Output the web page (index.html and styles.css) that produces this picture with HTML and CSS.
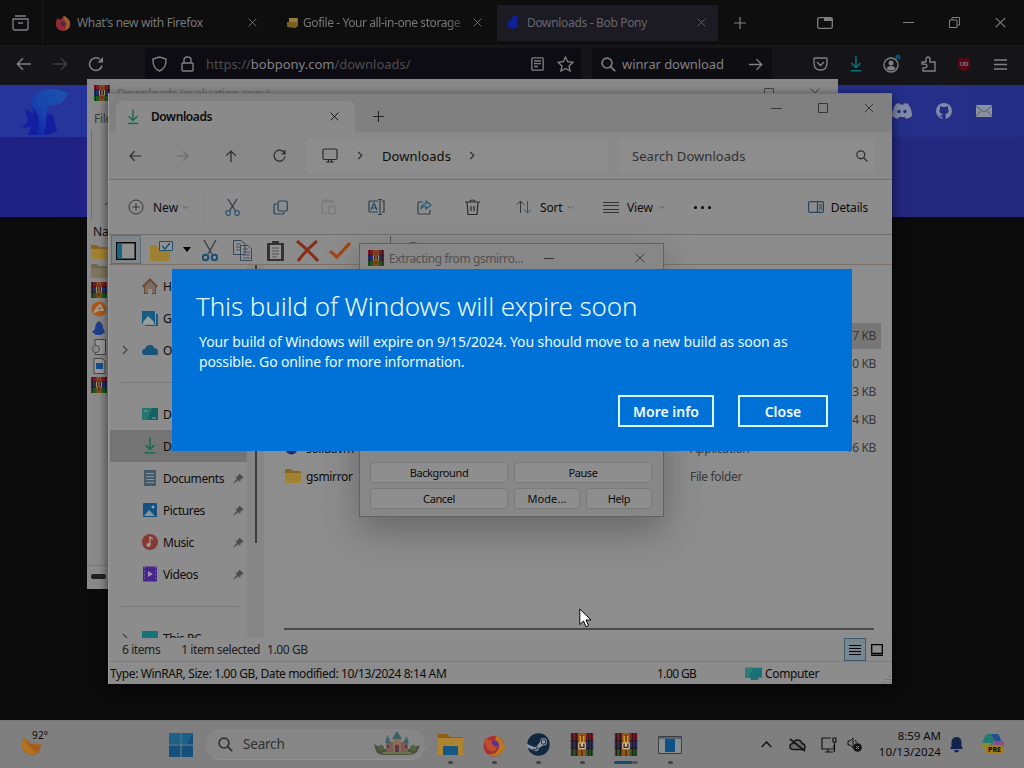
FILE: index.html
```html
<!DOCTYPE html>
<html lang="en">
<head>
<meta charset="utf-8">
<title>Desktop</title>
<link rel="stylesheet" href="styles.css">
</head>
<body>
<svg class="defs" width="0" height="0">
  <symbol id="x" viewBox="0 0 10 10"><path d="M.7 .7L9.3 9.3M9.3 .7L.7 9.3" fill="none" stroke="currentColor"/></symbol>
  <symbol id="back" viewBox="0 0 16 14"><path d="M15 7H1.5M7 1.2L1.3 7L7 12.8" fill="none" stroke="currentColor" stroke-width="1.5"/></symbol>
  <symbol id="chev" viewBox="0 0 6 10"><path d="M1 1L5 5L1 9" fill="none" stroke="currentColor" stroke-width="1.3"/></symbol>
  <symbol id="down" viewBox="0 0 8 5"><path d="M1 1L4 3.5L7 1" fill="none" stroke="#444" stroke-width=".7"/></symbol>
  <symbol id="plus" viewBox="0 0 12 12"><path d="M6 0V12M0 6H12" fill="none" stroke="currentColor" stroke-width="1.2"/></symbol>
  <symbol id="mag" viewBox="0 0 14 14"><circle cx="5.6" cy="5.6" r="4.6" fill="none" stroke="currentColor" stroke-width="1.5"/><path d="M9 9L13.3 13.3" stroke="currentColor" stroke-width="1.6"/></symbol>
  <symbol id="dl" viewBox="0 0 14 18"><path d="M7 0V12.5M2 8L7 13L12 8M1 16.5H13" fill="none" stroke="currentColor" stroke-width="1.7"/></symbol>
  <symbol id="rar" viewBox="0 0 16 16"><path fill="#7c1a2c" d="M0 0H16V5H0z"/><path fill="#22306e" d="M0 5H16V10.5H0z"/><path fill="#1b5a22" d="M0 10.5H16V16H0z"/><path stroke="#2a1612" d="M0 5H16M0 10.5H16M1.5 0V16M14.5 0V16" stroke-width=".8"/><path fill="#8a4a1c" d="M5.5 0H10.5V16H5.5z"/><path fill="#a39a6c" d="M5 5H11V10.5H5z"/><path stroke="#4a1f14" fill="none" d="M6.5 5V10M9.5 5V10M8 2V14"/></symbol>
  <symbol id="rarbig" viewBox="0 0 24 24"><path fill="#7a1c28" d="M0 0H24V8H0z"/><path fill="#2b2c66" d="M0 8H24V16H0z"/><path fill="#245a2a" d="M0 16H24V24H0z"/><path stroke="#27181a" stroke-width="1.2" d="M0 8H24M0 16H24M2 0V24M6 0V24M19 0V24M22 0V24"/><path fill="#9b5419" d="M8 0H16V24H8z"/><path fill="#d39a28" d="M9.5 3H14.5V12H9.5z"/><rect x="8" y="10" width="8" height="7" rx="1" fill="#c4bb9d"/><path d="M10 11V15H14V11M12 2V9M12 18V24" fill="none" stroke="#4c2412" stroke-width="1.4"/></symbol>
  <symbol id="folder" viewBox="0 0 16 14"><path fill="#86661a" d="M0 1Q0 0 1 0H6L8 2H15Q16 2 16 3V6H0z"/><path fill="#a18232" d="M0 4H16V13Q16 14 15 14H1Q0 14 0 13z"/></symbol>
  <symbol id="pin" viewBox="0 0 12 12"><path fill="#4c4c4c" d="M7 .5L11.5 5L10 6L8.5 6.5L7.8 9.5L5.6 7.8L1 11.5L.5 11L4.2 6.4L2.5 4.2L5.5 3.5L6 2z"/></symbol>
  <symbol id="screen" viewBox="0 0 18 14"><path fill="#187078" d="M0 0H18V11H0z"/><path fill="#2b7d76" d="M0 0H9L4 11H0z"/><path fill="#205e69" d="M6 11H14V13H6z"/></symbol>
  <symbol id="bird" viewBox="0 0 16 16"><path fill="#0f2194" d="M8 1Q13 0 14 3L12 6L12 9L12 13L9 12L8 15L5 12L2 12L3 8L1 7L6 5z"/></symbol>
  <symbol id="fox" viewBox="0 0 20 20"><circle cx="10" cy="11" r="8.7" fill="#a83035"/><path fill="#b87820" d="M12 1Q13 3 16 5Q22 12 16 17Q11 21 5 18Q14 18 14 11Q14 7 11 6z"/><circle cx="10" cy="10.5" r="4.2" fill="#5e2f95"/><path fill="#bd4d2b" d="M2 4L6 6L9 6Q7 8 9 10Q12 12 13 11Q12 16 7 15Q2 13 2 4z"/></symbol>
  <symbol id="foxtab" viewBox="0 0 20 20"><path fill="#8f2a35" d="M3 4L7 6L11 1Q19 5 19 12Q18 20 10 20T1 12Q1 7 3 4z"/><path fill="#9a6022" d="M11 1Q19 5 19 12Q18 18 12 19Q16 14 13 8Q10 5 11 1z"/><circle cx="10" cy="11" r="3" fill="#522548"/></symbol>
</svg>
<div class="desktop">
  <div class="browser">
    <div class="tabbar">
      <div class="viewbtn"><svg width="17" height="16" viewBox="0 0 17 16" fill="none" stroke="currentColor" stroke-width="1.3"><path d="M3 1H14M1 4H16V13Q16 15 14 15H3Q1 15 1 13zM6 8H11"/></svg></div>
      <div class="tab t1"><svg width="16" height="16"><use href="#foxtab"/></svg><span class="s1">What's new with Firefox</span><svg class="c" width="9" height="9"><use href="#x"/></svg></div>
      <div class="tab t2"><svg width="12" height="12" viewBox="0 0 12 12"><path fill="#78601f" d="M3 1H12V9L9 11L1 10V5H3z"/><path fill="#9a7b37" d="M3 1H11V5H3z"/></svg><span class="s2">Gofile - Your all-in-one storage</span><svg class="c" width="9" height="9"><use href="#x"/></svg></div>
      <div class="tab t3"><svg width="16" height="16"><use href="#bird"/></svg><span class="s3">Downloads - Bob Pony</span><svg class="c" width="9" height="9"><use href="#x"/></svg></div>
      <div class="slot44"><svg width="12" height="12"><use href="#plus"/></svg></div>
      <div class="winctl">
        <svg class="pip" width="16" height="12" viewBox="0 0 16 12"><rect x=".7" y=".7" width="14.6" height="10.6" rx="1.5" fill="none" stroke="currentColor" stroke-width="1.3"/><path fill="currentColor" d="M1 1H7V4H15V2L14 1z"/></svg>
        <svg width="11" height="11" viewBox="0 0 11 11"><path d="M0 5.500H11" stroke="currentColor"/></svg>
        <svg width="11" height="11" viewBox="0 0 11 11" fill="none" stroke="currentColor"><path d="M.5 3H8V10.500H.5zM3 3V.5H10.500V8H8"/></svg>
        <svg width="11" height="11"><use href="#x"/></svg>
      </div>
    </div>
    <div class="toolbar">
      <div class="ic"><svg width="16" height="14"><use href="#back"/></svg></div>
      <div class="ic dim flip"><svg width="16" height="14"><use href="#back"/></svg></div>
      <div class="ic"><svg width="16" height="16" viewBox="0 0 16 16"><path d="M14 9.5A6.3 6.3 0 1 1 11.7 3.2" fill="none" stroke="currentColor" stroke-width="1.5"/><path d="M9.5 6.5H15V1z" fill="currentColor"/></svg></div>
      <div class="urlbar">
        <svg width="15" height="16" viewBox="0 0 15 16"><path d="M7.500 1L14 3Q14.500 12 7.500 15Q.5 12 1 3z" fill="none" stroke="currentColor" stroke-width="1.4"/></svg>
        <svg class="lock" width="13" height="16" viewBox="0 0 13 16" fill="none" stroke="currentColor" stroke-width="1.4"><rect x="1" y="7" width="11" height="8" rx="1"/><path d="M3 7V4Q3 1 6.500 1T10 4V7"/></svg>
        <span class="url">https://<b>bobpony.com</b>/downloads/</span>
        <svg class="reader" width="13" height="14" viewBox="0 0 13 14" fill="none" stroke="currentColor" stroke-width="1.3"><rect x=".8" y=".8" width="11.400" height="12.400" rx="1"/><path d="M3 4H10M3 6.700H10M3 9.500H7"/></svg>
        <svg class="star" width="17" height="16" viewBox="0 0 17 16"><path d="M8.500 1L10.700 5.700L16 6.300L12 9.900L13.100 15L8.500 12.500L3.900 15L5 9.900L1 6.300L6.300 5.700z" fill="none" stroke="currentColor" stroke-width="1.300"/></svg>
      </div>
      <div class="search"><svg width="15" height="15"><use href="#mag"/></svg><span>winrar download</span><svg class="flip go" width="15" height="13"><use href="#back"/></svg></div>
      <div class="acts">
        <div class="ic"><svg width="15" height="14" viewBox="0 0 15 14" fill="none" stroke="currentColor" stroke-width="1.400"><path d="M2 1H13Q14 1 14 2V6Q14 13 7.500 13T1 6V2Q1 1 2 1zM4 5L7.500 8.500L11 5"/></svg></div>
        <div class="ic teal"><svg width="14" height="16" viewBox="0 0 14 18"><use href="#dl"/></svg></div>
        <div class="ic acct"><svg width="20" height="20" viewBox="0 0 20 20"><circle cx="9" cy="11" r="7" fill="none" stroke="currentColor" stroke-width="1.400"/><circle cx="9" cy="9" r="2.500" fill="currentColor"/><path d="M4.500 15Q5 12 9 12T13.500 15Q9 18 4.500 15z" fill="currentColor"/><circle cx="16" cy="3" r="2.600" fill="#09506a"/></svg></div>
        <div class="ic"><svg width="15" height="16" viewBox="0 0 15 16"><path d="M1 6H5V4Q5 1 7 1T9 4V6H14V15H2V12Q6 12 6 10T2 8H1z" fill="none" stroke="currentColor" stroke-width="1.400"/></svg></div>
        <div class="ic"><span class="ub">UD</span></div>
        <div class="ic"><svg width="13" height="11" viewBox="0 0 13 11"><path d="M0 1H13M0 5.500H13M0 10H13" stroke="currentColor" stroke-width="1.300"/></svg></div>
      </div>
    </div>
    <div class="site">
      <svg width="50" height="50" viewBox="0 0 50 50"><defs><linearGradient id="g" x1="1" y1="0" x2="0" y2="1"><stop offset="0" stop-color="#1c53aa"/><stop offset=".55" stop-color="#1745ae"/><stop offset="1" stop-color="#1120a8"/></linearGradient></defs><path fill="#131fa0" d="M5 24L14 29L10 17L21 27L33 30L37 46L28 50H8L11 42L2 43L8 36z"/><path fill="url(#g)" d="M13 13Q19 3 35 4L48 8Q46 15 40 19L27 22Q27 34 24 50H17Q22 34 15 25Q8 20 13 13z"/></svg>
      <div class="links">
        <svg width="20" height="16" viewBox="0 0 20 16"><path fill="currentColor" d="M4 1L7 0L8 1.500H12L13 0L16 1Q20 6 20 13Q17 15.500 14 16L13 14H7L6 16Q3 15.500 0 13Q0 6 4 1z"/><circle cx="7" cy="8.500" r="1.700" fill="#222d86"/><circle cx="13" cy="8.500" r="1.700" fill="#222d86"/></svg>
        <svg width="16" height="16" viewBox="0 0 16 16"><circle cx="8" cy="8" r="8" fill="currentColor"/><path fill="#222d86" d="M4 3L6.500 4H9.500L12 3V6Q14 10 9.500 11V16H6.500V14Q4 14 3 12Q5 13 6.500 12V11Q2 10 4 6z"/></svg>
        <svg width="16" height="12" viewBox="0 0 16 12"><rect width="16" height="12" fill="#8a939b"/><path d="M0 1L8 7L16 1M0 11L5.500 5.500M16 11L10.500 5.500" fill="none" stroke="#4c5b80"/></svg>
      </div>
    </div>
  </div>

  <div class="archive">
    <div class="atitle"><svg width="16" height="16"><use href="#rar"/></svg><span>Downloads (evaluation copy)</span><svg class="amax" width="10" height="10" viewBox="0 0 10 10"><path d="M.5 .5H9.500V9.500H.5z" fill="none" stroke="#454545"/></svg><svg width="10" height="10"><use href="#x"/></svg></div>
    <div class="amenu">File</div>
    <div class="atools"><svg width="6" height="4" viewBox="0 0 8 5"><path d="M1 4L4 1L7 4" fill="none" stroke="#333"/></svg></div>
    <div class="ahead">Name</div>
    <div class="alist">
      <svg viewBox="0 0 16 14"><use href="#folder"/></svg>
      <svg class="old" viewBox="0 0 16 14"><use href="#folder"/></svg>
      <svg><use href="#rar"/></svg>
      <svg viewBox="0 0 16 16"><circle cx="8" cy="8" r="7.500" fill="#a9581a"/><path fill="none" stroke="#a5a09a" stroke-width="1.800" d="M3 12L6 7L9 4L12 9L9 9Q7 8 6 11"/></svg>
      <svg viewBox="0 0 16 16"><path fill="#1d3f8c" d="M8 1Q12 3 12 8L14 12L10 15L5 15L1 12L4 9Q4 3 8 1z"/></svg>
      <svg viewBox="0 0 16 16"><path fill="#999" stroke="#444" d="M4 .5H14.500V15.500H4z"/><circle cx="5" cy="10" r="3.700" fill="#888" stroke="#555"/></svg>
      <svg viewBox="0 0 16 16"><path fill="#999" stroke="#444" d="M3 .5H11L14 3V15.500H3z"/><path fill="#174e8c" d="M5 5H12V11H5z"/></svg>
      <svg><use href="#rar"/></svg>
    </div>
    <div class="afoot"><i></i></div>
  </div>

  <div class="explorer">
    <div class="etitle">
      <div class="etab"><svg class="green" width="12" height="16" viewBox="0 0 14 18"><use href="#dl"/></svg><span>Downloads</span><svg class="c" width="9" height="9"><use href="#x"/></svg></div>
      <svg class="plus" width="11" height="11"><use href="#plus"/></svg>
      <div class="ectl"><svg width="11" height="11" viewBox="0 0 11 11"><path d="M0 5.500H11" stroke="currentColor"/></svg><svg width="10" height="10" viewBox="0 0 10 10"><path d="M.5 .5H9.500V9.500H.5z" fill="none" stroke="currentColor"/></svg><svg width="10" height="10"><use href="#x"/></svg></div>
    </div>
    <div class="enav">
      <div class="s48"><svg width="13" height="12" viewBox="0 0 16 14"><use href="#back"/></svg></div>
      <div class="s48 faint flip"><svg width="13" height="12" viewBox="0 0 16 14"><use href="#back"/></svg></div>
      <div class="s48 up"><svg width="13" height="12" viewBox="0 0 16 14"><use href="#back"/></svg></div>
      <div class="s48"><svg width="13" height="13" viewBox="0 0 13 13"><path d="M11.800 5A5.500 5.500 0 1 0 12 7.500M12 1V4.800H8.500" fill="none" stroke="currentColor" stroke-width="1.200"/></svg></div>
      <div class="path"><svg width="16" height="15" viewBox="0 0 16 15" fill="none" stroke="currentColor" stroke-width="1.200"><rect x="1" y="1" width="14" height="10.500" rx="1.500"/><path d="M4 14H12M6.500 12V14M9.500 12V14"/></svg><svg class="pc1" width="6" height="9" viewBox="0 0 6 10"><use href="#chev"/></svg><span>Downloads</span><svg width="6" height="9" viewBox="0 0 6 10"><use href="#chev"/></svg></div>
      <div class="find"><span>Search Downloads</span><svg width="12" height="12"><use href="#mag"/></svg></div>
    </div>
    <div class="ecmd">
      <div class="new"><svg width="16" height="16" viewBox="0 0 16 16" fill="none" stroke="#333"><circle cx="8" cy="8" r="7"/><path d="M8 4.500V11.500M4.500 8H11.500"/></svg><span>New</span><svg width="7" height="5"><use href="#down"/></svg></div>
      <div class="s48"><svg width="15" height="17" viewBox="0 0 15 17" fill="none" stroke="#30373e" stroke-width="1.200"><path d="M3 0L10.500 12M12 0L4.500 12"/><g stroke="#285675"><circle cx="3" cy="14" r="2.300"/><circle cx="12" cy="14" r="2.300"/></g></svg></div>
      <div class="s48"><svg width="15" height="15" viewBox="0 0 15 15" fill="none" stroke="#23465f" stroke-width="1.200"><rect x="5" y="1" width="9.300" height="10" rx="1.500"/><path d="M4 4H2Q1 4 1 5V12Q1 14 3 14H9Q11 14 11 12"/></svg></div>
      <div class="s48"><svg width="15" height="16" viewBox="0 0 15 16" fill="none" stroke="#747474"><path d="M4 2H1V14H6M9 2H12V5M4 1H9V3H4zM8 7H14V15H8z"/></svg></div>
      <div class="s48"><svg width="17" height="16" viewBox="0 0 17 16" fill="none" stroke="#2e3e4b" stroke-width="1.200"><path d="M10 2H2Q1 2 1 3V12Q1 13 2 13H10M14 2H16V13H14M12 0V16M10 .5H14M10 15.500H14"/><path stroke="#1b4a74" d="M3 11L6 4L9 11M4 9H8"/></svg></div>
      <div class="s48"><svg width="15" height="15" viewBox="0 0 15 15" fill="none" stroke="#333c44" stroke-width="1.200"><path d="M6 2H2Q1 2 1 3V13Q1 14 2 14H12Q13 14 13 13V10"/><path stroke="#285675" d="M9 1L14 5L9 9V6.500Q5 6 4 9Q4 4 9 4z"/></svg></div>
      <div class="s48"><svg width="15" height="17" viewBox="0 0 15 17" fill="none" stroke="#2c2c2c" stroke-width="1.200"><path d="M0 3H15M5 3Q5 1 7.500 1T10 3M2 3L3 15.500H12L13 3M6 7V12M9 7V12"/></svg></div>
      <div class="sort"><svg width="16" height="14" viewBox="0 0 16 14" fill="none" stroke="#333"><path d="M4.500 13V1M1 4.500L4.500 1L8 4.500"/><path stroke="#24557f" d="M11.500 1V13M8 9.500L11.500 13L15 9.500"/></svg><span>Sort</span><svg width="7" height="5"><use href="#down"/></svg></div>
      <div class="view"><svg width="16" height="13" viewBox="0 0 16 13"><path d="M0 1.500H16M0 4.500H16M0 8.500H16M0 11.500H16" stroke="#333"/></svg><span>View</span><svg width="7" height="5"><use href="#down"/></svg></div>
      <svg class="more" width="17" height="3" viewBox="0 0 17 3"><circle cx="1.500" cy="1.500" r="1.500"/><circle cx="8.500" cy="1.500" r="1.500"/><circle cx="15.500" cy="1.500" r="1.500"/></svg>
      <div class="details"><svg width="16" height="12" viewBox="0 0 16 12" fill="none" stroke="#24445f" stroke-width="1.200"><rect x=".6" y=".6" width="14.800" height="10.800" rx="1.500"/><path d="M9.500 1V11M11 4H14M11 6H14M11 8H14"/></svg><span>Details</span></div>
    </div>
    <div class="eclassic">
      <div class="pane"><svg width="20" height="18" viewBox="0 0 20 18"><path fill="#909090" stroke="#080808" stroke-width="1.500" d="M.8 .8H19.200V17.200H.8z"/><path fill="#176582" d="M1.500 1.500H6V16.500H1.500z"/></svg></div>
      <svg class="fc" width="24" height="20" viewBox="0 0 24 20"><path fill="#9f7f30" d="M0 4H6L8 7H20V20H0z"/><path fill="#8f9597" stroke="#244e6e" d="M9.500 .5H22.500V9.500H9.500z"/><path d="M12 5L15 8L20 2" fill="none" stroke="#164b73" stroke-width="1.300"/></svg>
      <svg class="tri" width="8" height="5"><path d="M0 0H8L4 5z"/></svg>
      <svg class="cut" width="16" height="22" viewBox="0 0 16 22" fill="none"><path d="M2 0L10 14M14 0L6 14" stroke="#40464a" stroke-width="1.500"/><g stroke="#174f79" stroke-width="2"><circle cx="3.500" cy="17.500" r="2.800"/><circle cx="12.500" cy="17.500" r="2.800"/></g></svg>
      <svg class="cp" width="19" height="21" viewBox="0 0 19 21"><path fill="#909090" stroke="#394655" d="M.5 .5H8L12 4V14.500H.5zM7.500 5.500H15L18.500 9V20.500H7.500z"/><path stroke="#405264" d="M3 4H8M3 7H7M3 10H7M10 9H15M10 12H17M10 15H17M10 18H17"/></svg>
      <svg class="pst" width="17" height="21" viewBox="0 0 17 21"><path fill="#333" d="M0 3H17V21H0zM5 1H12V4H5z"/><path fill="#929292" d="M3 5H14V19H3z"/><path stroke="#555" d="M5 8H12M5 11H12M5 14H12M5 17H10"/></svg>
      <svg class="del" width="23" height="22" viewBox="0 0 23 22"><path d="M1 1Q11 9 22 21M21 1Q10 10 2 21" fill="none" stroke="#872e18" stroke-width="3"/></svg>
      <svg class="ok" width="22" height="17" viewBox="0 0 22 17"><path d="M1 9L8 15L21 1" fill="none" stroke="#a14717" stroke-width="3.300"/></svg>
      <i class="bar"></i><svg class="arc" width="20" height="20" viewBox="0 0 20 20"><circle cx="10" cy="10" r="9" fill="#7b7b7b" stroke="#484848" stroke-width="2"/></svg>
    </div>
    <div class="ebody">
      <div class="side">
        <div class="row"><svg viewBox="0 0 16 16"><path fill="#6d4a37" d="M8 0L16 8L14 10V16H10V11H6V16H2V10L0 8z"/><path fill="#7d6c61" d="M8 3L13 8V15H10V11H6V15H3V8z"/></svg>Home</div>
        <div class="row"><svg viewBox="0 0 16 16"><path fill="#155b84" d="M0 1H13V14H0zM14 4H16V16H3V15H14z"/><path fill="#979ea0" d="M1 12L6 6L12 12V14H1z"/></svg>Gallery</div>
        <div class="row"><svg class="exp" width="6" height="10"><use href="#chev"/></svg><svg viewBox="0 0 16 16"><path fill="#16547b" d="M3 13Q0 13 0 10Q0 7 3 7Q4 3 8 3T12 6Q16 6 16 10T13 13z"/></svg>OneDrive</div>
        <div class="sep"></div>
        <div class="row"><svg viewBox="0 0 16 16"><path fill="#146267" d="M0 2H16V14H0z"/><path fill="#257770" d="M0 2H10L5 14H0z"/><path stroke="#7ba39b" d="M2 5H5M10 12H14"/></svg>Desktop</div>
        <div class="row on"><svg viewBox="0 0 16 18" class="green"><use href="#dl"/></svg>Downloads</div>
        <div class="row"><svg viewBox="0 0 16 16"><path fill="#455969" d="M2 0H14V16H2z"/><path stroke="#84929b" d="M4 3.500H12M4 6.500H12M4 9.500H12M4 12.500H12"/></svg>Documents<svg class="pin"><use href="#pin"/></svg></div>
        <div class="row"><svg viewBox="0 0 16 16"><rect x="1" y="1" width="14" height="14" rx="1" fill="#135180"/><path fill="#8397a0" d="M2 14L7 8L13 14z"/><circle cx="11" cy="5" r="1.500" fill="#8fa2aa"/></svg>Pictures<svg class="pin"><use href="#pin"/></svg></div>
        <div class="row"><svg viewBox="0 0 16 16"><circle cx="8" cy="8" r="8" fill="#853a36"/><path d="M8 11V3L11 5" fill="none" stroke="#a89690" stroke-width="1.300"/><circle cx="6.500" cy="11" r="2" fill="#a89690"/></svg>Music<svg class="pin"><use href="#pin"/></svg></div>
        <div class="row"><svg viewBox="0 0 16 16"><rect x="1" y=".5" width="14" height="15" rx="1" fill="#45258a"/><path fill="#9d92ab" d="M6 5L11 8L6 11z"/><path stroke="#786699" stroke-dasharray="1.500 2" d="M2.500 1V15M13.500 1V15"/></svg>Videos<svg class="pin"><use href="#pin"/></svg></div>
        <div class="sep s2p"></div>
        <div class="row"><svg class="exp" width="6" height="10"><use href="#chev"/></svg><svg viewBox="0 0 16 16"><path fill="#17737a" d="M0 1H16V13H0z"/></svg>This PC</div>
      </div>
      <div class="gutter"><i></i></div>
      <div class="files">
        <div class="fhead"></div>
        <div class="frow"><b></b><span></span><em></em><strong class="sel">7 KB</strong></div>
        <div class="frow"><b></b><span></span><em></em><strong>0 KB</strong></div>
        <div class="frow"><b></b><span></span><em></em><strong>3 KB</strong></div>
        <div class="frow"><b></b><span></span><em></em><strong>4 KB</strong></div>
        <div class="frow"><b><svg width="13" height="13"><circle cx="6.500" cy="6.500" r="6" fill="#172f72"/></svg></b><span>solidavm</span><em>Application</em><strong>16 KB</strong></div>
        <div class="frow"><b><svg width="16" height="14"><use href="#folder"/></svg></b><span>gsmirror</span><em>File folder</em><strong></strong></div>
        <div class="hscroll"></div>
      </div>
    </div>
    <div class="est1"><span class="e1">6 items</span><span class="e2">1 item selected</span><span class="e3">1.00 GB</span><div class="lay on"><svg width="12" height="11" viewBox="0 0 12 11"><path d="M0 1.500H12M0 4.500H12M0 7.500H12M0 10.500H12" stroke="#000"/></svg></div><div class="lay"><svg width="12" height="12" viewBox="0 0 12 12"><path d="M.7 .7H11.300V9.500H.7zM0 11.500H12" fill="none" stroke="#000" stroke-width="1.300"/></svg></div></div>
    <div class="est2"><span class="f1">Type: WinRAR, Size: 1.00 GB, Date modified: 10/13/2024 8:14 AM</span><span class="f2">1.00 GB</span><svg width="17" height="14" viewBox="0 0 18 14"><use href="#screen"/></svg><span class="f3">Computer</span><svg class="grip" width="9" height="9" viewBox="0 0 9 9"><path fill="#555" d="M7 1H8V2H7zM4 4H5V5H4zM7 4H8V5H7zM1 7H2V8H1zM4 7H5V8H4zM7 7H8V8H7z"/></svg></div>
  </div>

  <div class="extract">
    <div class="xtitle"><svg width="16" height="16"><use href="#rar"/></svg><span>Extracting from gsmirro...</span><svg class="mn" width="10" height="10"><path d="M0 5.500H10" stroke="#333"/></svg><svg width="10" height="10"><use href="#x"/></svg></div>
    <div class="xgrid"><button class="w2">Background</button><button class="w2">Pause</button><button class="w2">Cancel</button><button>Mode...</button><button>Help</button></div>
  </div>

  <div class="notice">
    <h1>This build of Windows will expire soon</h1>
    <p><span class="l1">Your build of Windows will expire on 9/15/2024. You should move to a new build as soon as</span><br><span class="l2">possible. Go online for more information.</span></p>
    <div class="btns"><button class="mi">More info</button><button class="cl">Close</button></div>
  </div>

  <svg class="cursor" width="13" height="20" viewBox="0 0 13 20"><path fill="#fff" stroke="#000" d="M.8 1V16.500L4.500 13L7 18.800L9.500 17.700L7 12H12z"/></svg>

  <div class="taskbar">
    <div class="weather"><svg width="22" height="22" viewBox="0 0 22 22"><path fill="#a75d19" d="M4 3Q7 12 20 10Q20 20 11 21Q1 20 1 11Q1 6 4 3z"/><path fill="#b0741f" d="M4 3Q5 14 16 18Q12 22 6 19Q0 15 1 9z"/></svg><span>92°</span></div>
    <div class="tk"><svg width="24" height="24" viewBox="0 0 24 24"><path fill="#14507b" d="M0 0H11.500V11.500H0zM12.500 0H24V11.500H12.500zM0 12.500H11.500V24H0zM12.500 12.500H24V24H12.500z"/><path fill="#23719a" opacity=".5" d="M0 0H11.500V11.500H0zM12.500 0H24L18 11.500H12.500z"/></svg></div>
    <div class="tsearch"><svg width="15" height="15"><use href="#mag"/></svg><span>Search</span>
      <svg class="castle" width="46" height="26" viewBox="0 0 46 26"><path fill="#48503e" d="M0 13L5 16L8 18H38L41 16L46 14L43 21Q40 24 33 24H12Q3 24 2 20z"/><path fill="#7a5d50" d="M12 11H34V21H12z"/><path fill="#916a56" d="M19 7H27V22H19z"/><path fill="#3c6266" d="M18 8L23 0L28 8zM11 12L13.500 4L17 12zM29 12L32.500 5L35 12z"/><path fill="#563647" d="M21 22V15Q23 12 25 15V22zM13 14H15V17H13zM31 14H33V17H31z"/><circle cx="7" cy="17" r="3" fill="#50603f"/><circle cx="39" cy="17" r="3" fill="#56643e"/><path stroke="#71714f" stroke-width="2" d="M9 22H37"/></svg></div>
    <div class="tk run"><svg width="25" height="23" viewBox="0 0 25 23"><path fill="#8b5e12" d="M0 1H9L12 4H25V10H0z"/><path fill="#ae8430" d="M0 5H25V22H0z"/><path fill="#155887" d="M5 14Q5 13 6 13H19Q20 13 20 14V22H5z"/></svg></div>
    <div class="tk run"><svg width="24" height="24"><use href="#fox"/></svg></div>
    <div class="tk run"><svg width="23" height="23" viewBox="0 0 23 23"><circle cx="11.500" cy="11.500" r="11.200" fill="#102840"/><path fill="#9097a0" d="M0 11L7 14Q9 13 10 13L13 9Q13 5 16.500 5T20 9T16 12.500L12 15Q11 19 8 18L5 16.500L0 14.500z"/><circle cx="16.500" cy="8.800" r="2.400" fill="#9097a0" stroke="#102840"/><path d="M6 16Q8 18 10 16T8 13.500" fill="none" stroke="#102840"/></svg></div>
    <div class="tk run"><svg width="24" height="23" viewBox="0 0 24 24"><use href="#rarbig"/></svg></div>
    <div class="tk run act"><svg width="24" height="23" viewBox="0 0 24 24"><use href="#rarbig"/></svg></div>
    <div class="tk run"><svg width="24" height="18" viewBox="0 0 24 18"><path fill="#888d90" stroke="#393f44" d="M.5 .5H23.500V17.500H.5z"/><path stroke="#526572" stroke-width="2" d="M1 2H23"/><path fill="#0e5186" d="M7 3H17V16H7z"/></svg></div>
    <div class="tray">
      <div class="y1"><svg width="11" height="7" viewBox="0 0 11 7"><path d="M.7 6L5.500 1L10.300 6" fill="none" stroke="#111" stroke-width="1.400"/></svg></div>
      <div class="y2"><svg width="17" height="14" viewBox="0 0 17 14" fill="none" stroke="#151515" stroke-width="1.500"><path fill="#6b6b6b" d="M4 11.500Q1 11.500 1 8.500T4 5.500Q5 2 8.500 2T13 5.500Q16 6 16 9T13 11.500z"/><path d="M1 1L16 13" stroke-width="1.700"/></svg></div>
      <div class="y1"><svg width="16" height="16" viewBox="0 0 16 16" fill="none" stroke="#151515" stroke-width="1.200"><path d="M10 1H1V12H13V8M4 15H12M7 12V15M12 1H15V5H12zM13.500 5V15"/></svg></div>
      <div class="y3"><svg width="15" height="15" viewBox="0 0 15 15"><path d="M1 4H3L6 1V11L3 8H1zM8 3Q10 4 9 6" fill="none" stroke="#111"/><circle cx="10.500" cy="10.500" r="4.300" fill="#111"/><path d="M9 9L12 12M12 9L9 12" stroke="#888"/></svg></div>
      <div class="clock"><span class="tm">8:59 AM</span><span class="dt">10/13/2024</span></div>
      <div class="bell"><svg width="13" height="16" viewBox="0 0 13 16"><path fill="#12244e" d="M6.500 0Q11 0 11.500 5V9L13 12H0L1.500 9V5Q2 0 6.500 0zM4 13H9Q8.500 15.500 6.500 15.500T4 13z"/></svg></div>
      <div class="pre"><svg width="24" height="24" viewBox="0 0 24 24"><path fill="#257a70" d="M7 1H15L11 14H3Q0 13 1 10L4 3Q5 1 7 1z"/><path fill="#244e93" d="M10 1H16Q18 1 19 4L20 8H14z"/><path fill="#844f8d" d="M13 8H21Q24 9 23 12L20 20H12z"/><path fill="#8a8b38" d="M1 10H10L8 18H6Q3 18 1 14z"/></svg><span>PRE</span></div>
    </div>
  </div>
</div>
</body>
</html>
```
FILE: styles.css
```css
* { box-sizing: border-box; }
body { margin: 0; background: #0b0b0b; font-family: "Noto Sans", "Open Sans", sans-serif; }
svg { display: block; flex: none; }
span { white-space: nowrap; }
.defs { position: absolute; }
.flip { transform: scaleX(-1); }
.desktop { position: relative; width: 1024px; height: 768px; overflow: hidden; background: #0b0b0b; font-size: 12px; color: #0c0c0c; }

/* browser */
.browser { color: #808083; }
.tabbar { height: 45px; display: flex; align-items: center; background: #0e0e0f; }
.viewbtn { width: 43px; height: 43px; display: flex; align-items: center; padding-left: 12px; border-right: 1px solid #1b1b1d; }
.tab { display: flex; align-items: center; height: 36px; font-size: 12px; letter-spacing: -.33px; color: #77777a; }
.tab .c { margin-left: auto; }
.t1 { width: 228px; padding: 0 14px 0 12px; gap: 6px; }
.t2 { width: 226px; padding: 0 15px; gap: 5px; }
.t2 span { letter-spacing: -.42px; -webkit-mask-image: linear-gradient(90deg, #000 92%, #0008); mask-image: linear-gradient(90deg, #000 92%, #0008); }
.t3 { width: 221px; padding: 0 12px 0 8px; gap: 6px; background: #1c1b24; color: #66666e; }
.slot44 { width: 44px; display: grid; place-items: center; }
.winctl { margin-left: auto; display: flex; align-items: center; padding-right: 18px; gap: 35px; }
.pip { margin-right: 35px; }
.toolbar { height: 40px; display: flex; align-items: center; padding: 0 0 3px 6px; background: #151519; border-top: 1px solid #18181b; }
.ic { width: 36px; display: grid; place-items: center; }
.dim { color: #3d3d41; }
.teal { color: #087374; }
.urlbar { display: flex; align-items: center; width: 436px; height: 32px; margin: 0 11px 0 31px; padding: 0 7px; background: #0d0c12; border-radius: 3px; font-size: 13px; color: #4d4d51; }
.urlbar svg { color: #808083; }
.urlbar b { font-weight: 400; color: #808085; }
.lock { margin-left: 14px; }
.url { margin-left: 12px; }
.reader { margin-left: auto; }
.star { margin-left: 13px; }
.search { display: flex; align-items: center; width: 180px; height: 32px; padding: 0 9px 0 9px; background: #0e0e12; font-size: 13px; letter-spacing: -.08px; }
.search span { margin-left: 6px; }
.go { margin-left: auto; }
.acts { display: flex; margin-left: auto; padding-right: 6px; }
.ub { width: 12px; height: 13px; border-radius: 3px 3px 6px 6px; background: #570711; font: 700 6px/12px "Liberation Sans", sans-serif; text-align: center; }
.site { height: 132px; padding: 0 32px 0 20px; display: flex; justify-content: space-between; background: linear-gradient(90deg, #26359c, #242e86) top / 100% 52px no-repeat, linear-gradient(90deg, #1f2184, #24297e); }
.links { display: flex; align-items: center; gap: 24px; height: 52px; color: #8089a6; }

/* archive window behind the explorer */
.archive { position: absolute; left: 87px; top: 79px; width: 751px; height: 510px; background: #898989; color: #3c3c3c; }
.atitle { height: 28px; display: flex; align-items: center; padding: 0 18px 0 7px; }
.atitle span { margin: 0 auto 0 7px; letter-spacing: -.3px; color: #666; }
.amax { margin-right: 36px; }
.amenu { height: 24px; padding: 3px 7px; letter-spacing: -.3px; }
.atools { height: 89px; margin-left: 4px; border-left: 1px dotted #555; padding: 71px 0 0 12px; }
.ahead { height: 24px; padding: 3px 6px; color: #111; }
.alist { padding: 0 4px; display: flex; flex-direction: column; gap: 3px; }
.alist svg { width: 16px; height: 16px; }
.alist .old { opacity: .6; filter: saturate(.6) brightness(.8); }
.afoot { margin-top: 172px; border-top: 1px solid #777; padding: 8px 4px; }
.afoot i { display: block; width: 15px; height: 5px; border-radius: 2px; background: #222; }

/* explorer */
.explorer { position: absolute; left: 108px; top: 93px; width: 784px; height: 591px; background: #8c8c8c; border-left: 1px solid #9a9a9a; border-top: 1px solid #747474; box-shadow: 0 3px 10px #000a; overflow: hidden; display: flex; flex-direction: column; }
.etitle { height: 38px; flex: none; display: flex; background: #808080; }
.etab { display: flex; align-items: center; width: 239px; margin: 7px 0 0 7px; padding: 0 16px 0 11px; background: #8a8a8a; border-radius: 7px 7px 0 0; font-weight: 600; letter-spacing: -.42px; }
.etab span { margin-left: 12px; }
.etab .c { margin-left: auto; }
.green { color: #1a6a50; }
.plus { margin: 17px 0 0 18px; color: #222; }
.ectl { margin: 9px 18px 0 auto; display: flex; gap: 36px; color: #383838; }
.enav { height: 48px; flex: none; display: flex; align-items: center; padding-left: 2px; background: #898989; border-bottom: 1px solid #707070; color: #2a2a2a; }
.s48 { width: 48px; height: 30px; display: grid; place-items: center; flex: none; }
.faint { color: #6b6b6b; }
.up { transform: rotate(90deg); }
.path { display: flex; align-items: center; width: 303px; height: 34px; margin-left: 3px; padding-left: 16px; background: #8d8d8d; border-radius: 4px; font-size: 13px; color: #2a2a2a; }
.pc1 { margin: 0 19px 0 19px; }
.path span { margin-right: 18px; letter-spacing: .1px; color: #0c0c0c; }
.find { display: flex; align-items: center; justify-content: space-between; width: 256px; height: 34px; margin-left: 10px; padding: 0 7px 0 13px; background: #8d8d8d; border-radius: 4px; font-size: 13px; letter-spacing: .05px; color: #303030; }
.ecmd { height: 55px; flex: none; display: flex; align-items: center; border-bottom: 1px solid #707070; }
.new { width: 96px; height: 42px; display: flex; align-items: center; padding-left: 19px; margin-right: 3px; border-right: 1px solid #868686; }
.new span { margin: 0 4px 0 9px; }
.sort { width: 86px; display: flex; align-items: center; margin-left: 20px; letter-spacing: -.2px; }
.sort span, .view span { margin: 0 5px 0 8px; }
.view { display: flex; align-items: center; width: 92px; padding-left: 1px; letter-spacing: -.1px; }
.details { display: flex; align-items: center; margin: 0 24px 0 auto; gap: 7px; letter-spacing: -.2px; }
.eclassic { height: 30px; flex: none; display: flex; align-items: center; padding-left: 2px; border-bottom: 1px solid #7b7168; background: #8c8c8c; }
.eclassic > svg:not(.arc):not(.tri) { position: relative; top: 1px; }
.pane { width: 30px; height: 29px; display: grid; place-items: center; padding-top: 2px; background: #7e868a; border: 1px solid #5a6c76; }
.fc { margin-left: 9px; }
.tri { margin-left: 9px; }
.cut { margin-left: 11px; }
.cp { margin-left: 15px; }
.pst { margin-left: 15px; }
.del { margin-left: 12px; }
.ok { margin-left: 10px; }
.bar { width: 1px; height: 20px; margin: 0 12px 8px 39px; background: #555; }
.arc { margin-top: 4px; }
.ebody { height: 373px; flex: none; display: flex; overflow: hidden; }
.side { width: 138px; padding-top: 5px; flex: none; letter-spacing: -.4px; }
.row { position: relative; height: 32px; display: flex; align-items: center; padding-left: 32px; margin: 0 0 0 1px; }
.row > svg:not(.pin):not(.exp) { width: 16px; height: 16px; margin-right: 5px; }
.row.on { background: #747474; }
.row .pin { width: 11px; height: 11px; margin: 0 3px 0 auto; }
.row .exp { position: absolute; left: 12px; top: 11px; width: 6px; height: 10px; color: #444; }
.sep { height: 32px; margin: 0 8px 0 12px; background: linear-gradient(#787878, #787878) 0 16px / 100% 1px no-repeat; }
.gutter { width: 17px; flex: none; background: #868686; padding-left: 8px; }
.gutter i { display: block; width: 2px; height: 278px; background: #3b3b3b; }
.files { width: 628px; padding: 0 16px 0 21px; background: #8d8d8d; }
.fhead { height: 57px; }
.frow { height: 28px; display: grid; grid-template-columns: 21px 384px 1fr 60px; align-items: center; letter-spacing: -.35px; }
.frow em { font-style: normal; color: #383838; }
.frow strong { font-weight: 400; text-align: right; color: #383838; height: 26px; line-height: 26px; font-size: 12px; margin-right: -2px; padding-right: 2px; }
.frow .sel { background: #767676; margin-right: -5px; padding-right: 5px; }
.frow b svg { margin-left: 0; }
.hscroll { height: 2px; margin: 138px 2px 0 -1px; background: #4a4a4a; }
.est1 { height: 24px; flex: none; display: flex; align-items: center; padding: 0 4px 0 13px; border-bottom: 1px solid #7c7c7c; letter-spacing: -.42px; color: #202020; }
.e2 { margin-left: 21px; }
.e3 { margin: 0 auto 0 7px; }
.lay { width: 22px; height: 23px; display: grid; place-items: center; }
.lay.on { background: #78868f; border: 1px solid #3f5b6b; }
.est2 { height: 23px; flex: none; display: flex; align-items: center; padding-left: 1px; }
.f1 { width: 547px; letter-spacing: -.39px; }
.f2 { width: 88px; letter-spacing: -.6px; }
.f3 { letter-spacing: -.35px; }
.est2 svg { margin-right: 3px; }
.est2 .grip { margin: 12px 1px 0 auto; }

/* extraction dialog */
.extract { position: absolute; left: 359px; top: 243px; width: 305px; height: 274px; display: flex; flex-direction: column; justify-content: space-between; background: #878787; border: 1px solid #626262; box-shadow: 0 14px 34px #0004; }
.xtitle { height: 28px; display: flex; align-items: center; padding: 0 18px 0 8px; color: #404040; }
.xtitle span { margin-left: 5px; letter-spacing: -.4px; color: #505050; }
.mn { margin: 0 auto 0 21px; }
.xgrid { display: grid; grid-template-columns: 66px 66px 66px 66px; gap: 5px 6px; padding: 0 0 7px 10px; }
button { font-family: inherit; padding: 0; }
.xgrid button { height: 21px; border: 1px solid #7a7a7a; border-radius: 3px; background: #8e8e8e; font-size: 11px; letter-spacing: -.4px; color: #0c0c0c; }
.xgrid .w2 { grid-column: span 2; }
.xgrid button:nth-child(4) { letter-spacing: .1px; }

/* expiry notice */
.notice { position: absolute; left: 172px; top: 269px; width: 680px; height: 182px; padding: 19px 24px 24px; background: #0071d7; color: #e9fbff; display: flex; flex-direction: column; }
.notice h1 { margin: 0; font-size: 26px; line-height: 36px; font-weight: 300; letter-spacing: -.1px; white-space: nowrap; }
.notice p { margin: 8px 0 0 3px; font-size: 14px; line-height: 20px; letter-spacing: -.09px; }
.l2 { letter-spacing: -.15px; }
.btns { margin-top: auto; display: flex; justify-content: flex-end; gap: 24px; }
.btns button { height: 32px; border: 2px solid #d9f8ff; background: none; font-size: 14px; font-weight: 600; color: #f0fcff; }
.mi { width: 96px; }
.cl { width: 90px; }
.cursor { position: absolute; left: 579px; top: 608px; }

/* taskbar */
.taskbar { position: absolute; left: 0; top: 720px; width: 1024px; height: 48px; display: flex; align-items: center; background: #7f7f7f; border-top: 1px solid #777; }
.weather { position: relative; width: 159px; padding-left: 21px; }
.weather span { position: absolute; left: 32px; top: -6px; font-size: 10px; letter-spacing: .2px; }
.tk { position: relative; width: 44px; height: 47px; display: grid; place-items: center; }
.run::after { content: ""; position: absolute; left: 20px; bottom: 4px; width: 5px; height: 3px; border-radius: 2px; background: #444; }
.act::after { left: 10px; width: 24px; background: linear-gradient(90deg, #174d73 75%, #555 75%); }
.tsearch { display: flex; align-items: center; width: 219px; height: 31px; margin: 0 3px; padding: 0 5px 0 12px; border-radius: 16px; background: #868686; border-bottom: 1px solid #929292; font-size: 13.500px; letter-spacing: -.2px; color: #303030; }
.tsearch span { margin: 0 auto 0 10px; }
.tray { display: flex; align-items: center; margin-left: auto; padding-right: 9px; }
.tray > div { display: grid; place-items: center; }
.y1 { width: 32px; }
.y2 { width: 31px; }
.y3 { width: 18px; }
.tray .clock { width: 78px; display: flex; flex-direction: column; align-items: flex-end; font-size: 11.500px; line-height: 16px; padding-bottom: 1px; }
.tm { letter-spacing: -.05px; }
.dt { letter-spacing: .1px; }
.bell { width: 30px; }
.tray .pre { position: relative; width: 44px; }
.pre span { position: absolute; left: 15px; top: 12px; height: 9px; padding: 0 2px; border-radius: 2px; background: #a57c18; font-size: 7px; line-height: 9px; font-weight: 800; }
```
